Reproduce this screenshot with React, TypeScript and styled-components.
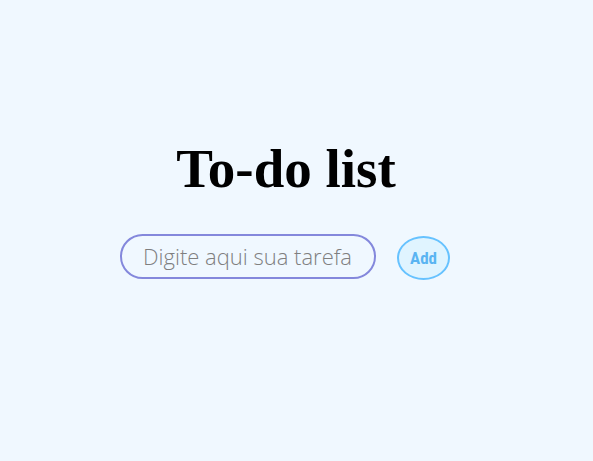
import React from "react";
import styled, { createGlobalStyle } from "styled-components";

const GlobalStyle = createGlobalStyle`
  html, body { margin: 0; padding: 0; }
  body { background: #f0f8ff; }
`;

const Page = styled.main`
  min-height: 100vh;
  display: flex;
  flex-direction: column;
  align-items: center;
  justify-content: center;
  box-sizing: border-box;
  padding-bottom: 44px;
  padding-right: 21px;
`;

const Title = styled.h1`
  margin: 0 0 32px;
  font-family: "Liberation Serif", "Times New Roman", serif;
  font-weight: 700;
  font-size: 55px;
  line-height: 1.15;
  color: #000;
`;

const Row = styled.form`
  display: flex;
  align-items: center;
  gap: 21px;
  margin-left: -2px;
`;

const TaskInput = styled.input`
  box-sizing: border-box;
  width: 256px;
  height: 45px;
  border: 2px solid #8488dc;
  border-radius: 23px;
  background: transparent;
  padding: 0 0 0 21px;
  font-family: "Open Sans", sans-serif;
  font-weight: 300;
  font-size: 22px;
  color: #333;
  outline: none;
  &::placeholder { color: #7f7f7f; }
`;

const AddButton = styled.button`
  box-sizing: border-box;
  width: 53px;
  height: 44px;
  margin-top: 4px;
  border: 2px solid #66c2ff;
  border-radius: 50%;
  background: #e0f4ff;
  color: #5ab4f2;
  font-family: "Liberation Sans Narrow", "Roboto Condensed", Roboto, sans-serif;
  font-weight: 700;
  font-size: 17px;
  padding: 0;
  cursor: pointer;
`;

export default function App() {
  return (
    <>
      <GlobalStyle />
      <Page>
        <Title>To-do list</Title>
        <Row onSubmit={(e) => e.preventDefault()}>
          <TaskInput placeholder="Digite aqui sua tarefa" />
          <AddButton type="submit">Add</AddButton>
        </Row>
      </Page>
    </>
  );
}
